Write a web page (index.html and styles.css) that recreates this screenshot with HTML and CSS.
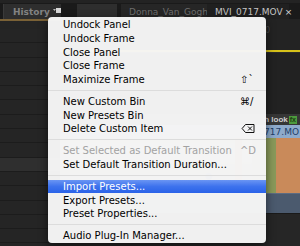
FILE: index.html
```html
<!DOCTYPE html>
<html lang="en">
<head>
  <meta charset="UTF-8" />
  <title>Panel Menu</title>
  <link rel="stylesheet" href="styles.css">
</head>
<body>
  <div class="app">
    <div class="tabbar">
      <div class="tab tab-history">History
        <svg class="panel-btn" width="8" height="6" viewBox="0 0 8 6"><rect x="3" y="0" width="5" height="5" fill="#d8d8d8"/><path d="M0 1h3l-1.5 2z" fill="#bbb"/></svg>
      </div>
      <div class="tab tab-blank"></div>
      <div class="tab tab-donna">Donna_Van_Gogh</div>
      <div class="tab tab-mvi">MVI_0717.MOV <span class="close">×</span></div>
    </div>

    <div class="main">
      <div class="left-panel">
        <div class="underline"></div>
        <div class="row"></div>
        <div class="row"></div>
        <div class="row"></div>
        <div class="row"></div>
        <div class="row"></div>
        <div class="row"></div>
        <div class="row"></div>
        <div class="row"></div>
        <div class="row"></div>
        <div class="row active"></div>
        <div class="row"></div>
        <div class="row"></div>
        <div class="row"></div>
        <div class="row"></div>
        <div class="row"></div>
      </div>

      <div class="right-panel">
        <div class="ruler"><span class="ruler-num">0</span></div>
        <div class="playhead"></div>
        <div class="empty-track"></div>
        <div class="track-label">h look <span class="fx">fx</span></div>
        <div class="clip-head">0717.MO</div>
        <div class="thumb"></div>
        <div class="clip-audio"></div>
        <div class="track-rest"></div>
      </div>
    </div>
  </div>

  <div class="menu">
    <div class="item">Undock Panel</div>
    <div class="item">Undock Frame</div>
    <div class="item">Close Panel</div>
    <div class="item">Close Frame</div>
    <div class="item">Maximize Frame <span class="key">⇧`</span></div>
    <div class="sep"></div>
    <div class="item">New Custom Bin <span class="key">⌘/</span></div>
    <div class="item">New Presets Bin</div>
    <div class="item">Delete Custom Item
      <svg class="key del" width="13" height="9" viewBox="0 0 13 9"><path d="M4 0.5h8.5v8H4L0.6 4.5z" fill="none" stroke="#111" stroke-width="1"/><path d="M6.5 2.5l4 4M10.5 2.5l-4 4" stroke="#111" stroke-width="1"/></svg>
    </div>
    <div class="sep"></div>
    <div class="item disabled">Set Selected as Default Transition <span class="key">^D</span></div>
    <div class="item">Set Default Transition Duration...</div>
    <div class="sep"></div>
    <div class="item selected">Import Presets...</div>
    <div class="item">Export Presets...</div>
    <div class="item">Preset Properties...</div>
    <div class="sep"></div>
    <div class="item">Audio Plug-In Manager...</div>
  </div>
</body>
</html>
```

FILE: styles.css
```css
* {
  box-sizing: border-box;
}

body {
  margin: 0;
  width: 300px;
  height: 246px;
  overflow: hidden;
  background: #1e1e1e;
  font-family: "DejaVu Sans", sans-serif;
  position: relative;
}

.app {
  display: flex;
  flex-direction: column;
  height: 100%;
}

/* top tabs */
.tabbar {
  height: 19px;
  display: flex;
  align-items: flex-end;
  background: #1a1a1a;
  border-top: 3px solid #232323;
  font-size: 9px;
  font-weight: bold;
}

.tab {
  height: 15px;
  display: flex;
  align-items: center;
  color: #828282;
  white-space: nowrap;
}

.tab-history {
  width: 58px;
  margin-left: 3px;
  padding-left: 9px;
  background: #2e2e2e;
  border-left: 1px solid #3a3a3a;
  position: relative;
}

.panel-btn {
  position: absolute;
  left: 49px;
  top: 4px;
}

.tab-blank {
  width: 40px;
  margin-left: 16px;
  background: #2e2e2e;
}

.tab-donna {
  width: 86px;
  margin-left: 4px;
  padding-left: 8px;
  background: #262626;
  color: #6e6e6e;
  font-weight: normal;
}

.tab-mvi {
  width: 82px;
  padding-left: 8px;
  background: #202020;
  color: #c4c4c4;
  font-weight: normal;
}

.close {
  margin-left: 2px;
  font-size: 9px;
  color: #d8d8d8;
}

.main {
  flex: 1;
  display: flex;
}

/* left list panel */
.left-panel {
  width: 60px;
  background: #242424;
  display: flex;
  flex-direction: column;
}

.underline {
  height: 2px;
  background: #7a6136;
  margin-bottom: 8px;
}

.row {
  height: 14.3px;
  border-bottom: 1px solid #1c1c1c;
  background: #252525;
}

.row.active {
  background: #2f2f2f;
}

/* right sequence panel */
.right-panel {
  flex: 1;
  display: flex;
  flex-direction: column;
  background: #202020;
}

.ruler {
  height: 31px;
  background: #232323;
  display: flex;
  justify-content: flex-end;
  padding: 7px 0 0 0;
}

.ruler-num {
  font-size: 8px;
  color: #4a4a4a;
  margin-right: 30px;
}

.playhead {
  height: 2px;
  background: #d6c21a;
}

.empty-track {
  height: 62px;
  background: #222;
  border-top: 1px solid #2c2c2c;
}

.track-label {
  height: 11px;
  background: #363636;
  color: #cfcfcf;
  font-family: "Liberation Sans", sans-serif;
  font-size: 8px;
  font-weight: bold;
  display: flex;
  align-items: center;
  justify-content: flex-end;
  padding-right: 3px;
  gap: 1px;
}

.fx {
  background: #4d9a3d;
  color: #1c3d12;
  font-size: 7px;
  padding: 0 1px;
  line-height: 8px;
}

.clip-head {
  height: 13px;
  background: #8eaacb;
  color: #1e3e68;
  font-size: 9px;
  display: flex;
  align-items: center;
  justify-content: flex-end;
  padding-right: 1px;
}

.thumb {
  height: 55px;
  background:
    radial-gradient(circle at 62% 70%, #2a4a90 0 3px, transparent 4px),
    linear-gradient(90deg, transparent 0 73%, #b06a40 73% 76%, transparent 76%),
    linear-gradient(90deg, transparent 0 80%, #8a9a5a 80% 90%, #c98a5a 90%),
    linear-gradient(180deg, #a8a8a0 0%, #cfcfc8 35%, #7f7f78 60%, #c6c0b0 100%);
}

.clip-audio {
  height: 20px;
  background: #4b5a6e;
  border-top: 1px solid #5d6c82;
}

.track-rest {
  flex: 1;
  background: #262626;
  border-top: 1px solid #1a1a1a;
}

/* context menu */
.menu {
  position: absolute;
  left: 48px;
  top: 17px;
  width: 218px;
  padding-top: 1px;
  background: rgba(245, 245, 245, 0.98);
  border-radius: 4px;
  box-shadow: 0 3px 10px rgba(0, 0, 0, 0.55);
  font-size: 10px;
  color: #000;
}

.item {
  height: 13.7px;
  padding: 0 10px 0 15px;
  display: flex;
  align-items: center;
  justify-content: space-between;
  white-space: nowrap;
}

.item.disabled {
  color: #a2a2a2;
}

.item.selected {
  color: #fff;
  background: linear-gradient(180deg, #6a95f3 0%, #3d72ed 50%, #2a63e8 100%);
}

.key {
  min-width: 16px;
}

.sep {
  height: 8.3px;
  display: flex;
  align-items: center;
}

.sep::after {
  content: "";
  flex: 1;
  height: 1px;
  background: #dcdcdc;
}
```
